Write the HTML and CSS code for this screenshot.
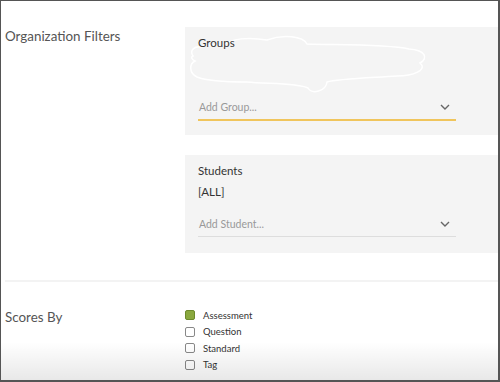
FILE: index.html
```html
<!DOCTYPE html>
<html lang="en">
<head>
    <meta charset="UTF-8">
    <title>Report Filters</title>
    <link rel="stylesheet" href="styles.css">
</head>
<body>
    <div class="frame">

        <!-- Organization filters -->
        <div class="section org">
            <div class="section-title">Organization Filters</div>
            <div class="panels">
                <div class="panel groups">
                    <svg class="redact" width="250" height="72" viewBox="0 0 250 72">
                        <path d="M6,24 C2,18 8,14 14,15 C22,12 30,13 36,14 C44,6 62,5 80,8 C96,2 116,4 120,12 C150,13 200,12 222,17 C238,18 242,26 233,31 C241,38 226,44 210,44 C180,46 150,47 140,50 C139,59 125,63 121,56 C110,51 80,52 60,50 C40,50 20,49 10,45 C2,41 2,32 8,29 C4,27 4,25 6,24 Z" />
                    </svg>
                    <div class="panel-title">Groups</div>
                    <div class="select active">
                        <span>Add Group...</span>
                        <svg class="chevron" width="10" height="6" viewBox="0 0 10 6"><path d="M1,1 L5,5 L9,1" /></svg>
                    </div>
                </div>

                <div class="panel students">
                    <div class="panel-title">Students</div>
                    <div class="panel-value">[ALL]</div>
                    <div class="select">
                        <span>Add Student...</span>
                        <svg class="chevron" width="10" height="6" viewBox="0 0 10 6"><path d="M1,1 L5,5 L9,1" /></svg>
                    </div>
                </div>
            </div>
        </div>

        <div class="divider"></div>

        <!-- Scores by -->
        <div class="section scores">
            <div class="section-title">Scores By</div>
            <ul class="checks">
                <li><span class="box checked"></span>Assessment</li>
                <li><span class="box"></span>Question</li>
                <li><span class="box"></span>Standard</li>
                <li><span class="box"></span>Tag</li>
            </ul>
        </div>

        <div class="fade"></div>
    </div>
</body>
</html>
```

FILE: styles.css
```css
body {
    margin: 0;
    font-family: Lato, 'Open Sans', sans-serif;
    color: #444;
    background: #fff;
}
.frame {
    position: relative;
    width: 500px;
    height: 382px;
    box-sizing: border-box;
    border: 1px solid #555;
    border-right-width: 2px;
    border-bottom-width: 2px;
    overflow: hidden;
}
.section {
    display: flex;
}
.section-title {
    width: 180px;
    padding-left: 4px;
    font-size: 13.4px;
    line-height: 18px;
    color: #555;
}
.org {
    padding-top: 26px;
}
.panels {
    flex: 1;
}
.panel {
    position: relative;
    background: #f4f4f4;
    padding: 8px 0 0 13px;
    box-sizing: border-box;
}
.panel.groups {
    height: 108px;
}
.panel.students {
    height: 98px;
    margin-top: 20px;
}
.panel-title,
.panel-value,
.select {
    position: relative;
}
.panel-title {
    font-size: 11.5px;
    line-height: 15px;
    color: #333;
}
.panel-value {
    font-size: 11.5px;
    line-height: 15px;
    color: #333;
    margin-top: 6px;
}
.redact {
    position: absolute;
    left: 2px;
    top: 5px;
}
.redact path {
    fill: none;
    stroke: #fff;
    stroke-width: 1.5;
}
.select {
    display: flex;
    align-items: center;
    justify-content: space-between;
    width: 258px;
    box-sizing: border-box;
    padding: 0 6px 3px 1px;
    height: 23px;
    border-bottom: 1px solid #ddd;
    font-size: 10.5px;
    color: #999;
}
.groups .select {
    margin-top: 48px;
}
.students .select {
    margin-top: 15px;
}
.select.active {
    border-bottom: 2px solid #f0c55c;
}
.chevron path {
    fill: none;
    stroke: #666;
    stroke-width: 1.4;
}
.divider {
    height: 2px;
    margin: 27px 0 0 4px;
    background: #f3f3f3;
}
.scores {
    padding-top: 26px;
}
.checks {
    list-style: none;
    margin: -1px 0 0;
    padding: 0;
}
.checks li {
    display: flex;
    align-items: center;
    height: 16.5px;
    font-size: 9.5px;
    color: #333;
}
.box {
    width: 8px;
    height: 8px;
    margin-right: 8px;
    border: 1px solid #888;
    border-radius: 2px;
    background: #fff;
}
.box.checked {
    background: #8aa83e;
    border-color: #6d8a2c;
}
.fade {
    position: absolute;
    left: 0;
    right: 0;
    bottom: 0;
    height: 38px;
    background: linear-gradient(rgba(0, 0, 0, 0), rgba(0, 0, 0, 0.09));
    pointer-events: none;
}
```
